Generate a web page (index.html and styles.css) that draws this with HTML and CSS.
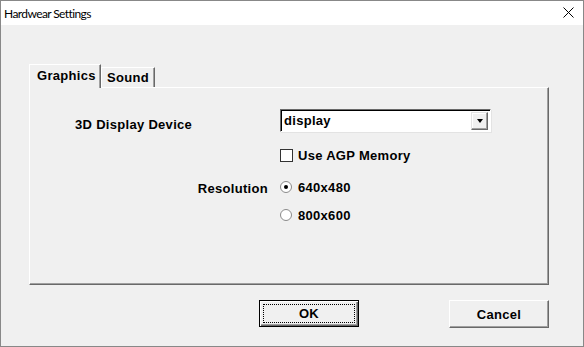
FILE: index.html
```html
<!DOCTYPE html>
<html lang="en">
<head>
    <meta charset="UTF-8">
    <title>Hardwear Settings</title>
    <link rel="stylesheet" href="styles.css">
</head>
<body>
    <div class="window">
        <div class="titlebar">
            <span class="title">Hardwear Settings</span>
            <svg class="close" width="11" height="11" viewBox="0 0 11 11">
                <path d="M0.5 0.5 L10.5 10.5 M10.5 0.5 L0.5 10.5" stroke="#000" stroke-width="1"/>
            </svg>
        </div>

        <div class="content">
            <div class="tabs">
                <div class="tab active">Graphics</div>
                <div class="tab">Sound</div>
            </div>

            <div class="panel">
                <div class="row first">
                    <div class="label left">3D Display Device</div>
                    <div class="combo">
                        <span class="combo-text">display</span>
                        <span class="combo-btn"><span class="arrow"></span></span>
                    </div>
                </div>
                <div class="row check-row">
                    <div class="label"></div>
                    <span class="checkbox"></span>
                    <span class="opt">Use AGP Memory</span>
                </div>
                <div class="row radio-row">
                    <div class="label right">Resolution</div>
                    <span class="radio checked"></span>
                    <span class="opt">640x480</span>
                </div>
                <div class="row radio-row second">
                    <div class="label"></div>
                    <span class="radio"></span>
                    <span class="opt">800x600</span>
                </div>
            </div>

            <div class="actions">
                <button class="btn default"><span class="focus">OK</span></button>
                <button class="btn">Cancel</button>
            </div>
        </div>
    </div>
</body>
</html>
```

FILE: styles.css
```css
body {
    margin: 0;
    background-color: #f0f0f0;
}
.window {
    width: 584px;
    height: 347px;
    box-sizing: border-box;
    border: 1px solid #888;
    display: flex;
    flex-direction: column;
    font-family: "Liberation Sans", Arial, sans-serif;
    font-weight: bold;
    font-size: 13px;
    letter-spacing: 0.3px;
    color: #000;
}
.titlebar {
    height: 24px;
    background-color: #fff;
    display: flex;
    align-items: center;
    justify-content: space-between;
    padding: 0 9px 0 3px;
}
.title {
    font-family: Lato, "Liberation Sans", sans-serif;
    font-weight: normal;
    font-size: 12px;
    letter-spacing: -0.6px;
}
.close {
    margin-top: -1px;
}
.content {
    flex: 1;
    background-color: #f0f0f0;
    padding: 39px 0 0 28px;
}
.tabs {
    display: flex;
    align-items: flex-end;
    height: 23px;
}
.tab {
    box-sizing: border-box;
    height: 20px;
    padding: 0 0 0 5px;
    border-top: 1px solid #fff;
    border-left: 1px solid #fff;
    border-right: 1px solid #696969;
    box-shadow: inset -1px 0 #a0a0a0;
    line-height: 19px;
    width: 54px;
}
.tab.active {
    height: 24px;
    width: 72px;
    padding-left: 7px;
    line-height: 22px;
    margin-bottom: -1px;
    background-color: #f0f0f0;
    position: relative;
    z-index: 1;
}
.panel {
    box-sizing: border-box;
    width: 520px;
    height: 198px;
    border-top: 1px solid #fff;
    border-left: 1px solid #fff;
    border-right: 1px solid #696969;
    border-bottom: 1px solid #696969;
    box-shadow: inset -1px -1px #a0a0a0;
    padding-top: 21px;
}
.row {
    display: flex;
    align-items: center;
    height: 20px;
}
.row.first {
    height: 23px;
}
.check-row {
    margin-top: 13px;
}
.radio-row {
    margin-top: 12px;
}
.radio-row.second {
    margin-top: 8px;
}
.label {
    width: 250px;
    flex-shrink: 0;
    box-sizing: border-box;
}
.label.left {
    padding: 8px 0 0 45px;
}
.label.right {
    text-align: right;
    padding: 3px 12px 0 0;
}
.combo {
    box-sizing: border-box;
    width: 211px;
    height: 23px;
    background-color: #fff;
    border-top: 1px solid #696969;
    border-left: 1px solid #696969;
    border-right: 1px solid #fff;
    border-bottom: 1px solid #fff;
    box-shadow: inset 1px 1px #000, 1px 1px #e3e3e3;
    display: flex;
    align-items: center;
    justify-content: space-between;
    padding: 0 2px 0 3px;
}
.combo-btn {
    box-sizing: border-box;
    width: 17px;
    height: 18px;
    background-color: #f0f0f0;
    border-top: 1px solid #e3e3e3;
    border-left: 1px solid #e3e3e3;
    border-right: 1px solid #696969;
    border-bottom: 1px solid #696969;
    box-shadow: inset -1px -1px #a0a0a0, inset 1px 1px #fff;
    display: flex;
    align-items: center;
    justify-content: center;
}
.arrow {
    width: 0;
    height: 0;
    border-left: 3.5px solid transparent;
    border-right: 3.5px solid transparent;
    border-top: 4px solid #000;
    margin-top: 1px;
}
.checkbox {
    box-sizing: border-box;
    width: 13px;
    height: 13px;
    background-color: #fff;
    border: 1px solid #333;
    margin-right: 5px;
}
.radio {
    box-sizing: border-box;
    width: 12px;
    height: 12px;
    border-radius: 50%;
    background-color: #fff;
    border: 1px solid #8a8a8a;
    margin-right: 6px;
    display: flex;
    align-items: center;
    justify-content: center;
}
.radio.checked::after {
    content: "";
    width: 4px;
    height: 4px;
    border-radius: 50%;
    background-color: #000;
}
.actions {
    display: flex;
    gap: 90px;
    margin-top: 15px;
    padding-left: 230px;
}
.btn {
    box-sizing: border-box;
    width: 100px;
    height: 28px;
    padding: 0;
    font-family: inherit;
    font-weight: bold;
    font-size: 13px;
    letter-spacing: 0.3px;
    color: #000;
    background-color: #f0f0f0;
    border-top: 1px solid #fff;
    border-left: 1px solid #fff;
    border-right: 1px solid #696969;
    border-bottom: 1px solid #696969;
    box-shadow: inset -1px -1px #a0a0a0;
}
.btn.default {
    height: 27px;
    border: 1px solid #000;
    box-shadow: inset 1px 1px #fff, inset -1px -1px #696969, inset -2px -2px #a0a0a0;
    padding: 3px;
}
.focus {
    display: block;
    height: 100%;
    box-sizing: border-box;
    border: 1px dotted #000;
    line-height: 17px;
}
```
